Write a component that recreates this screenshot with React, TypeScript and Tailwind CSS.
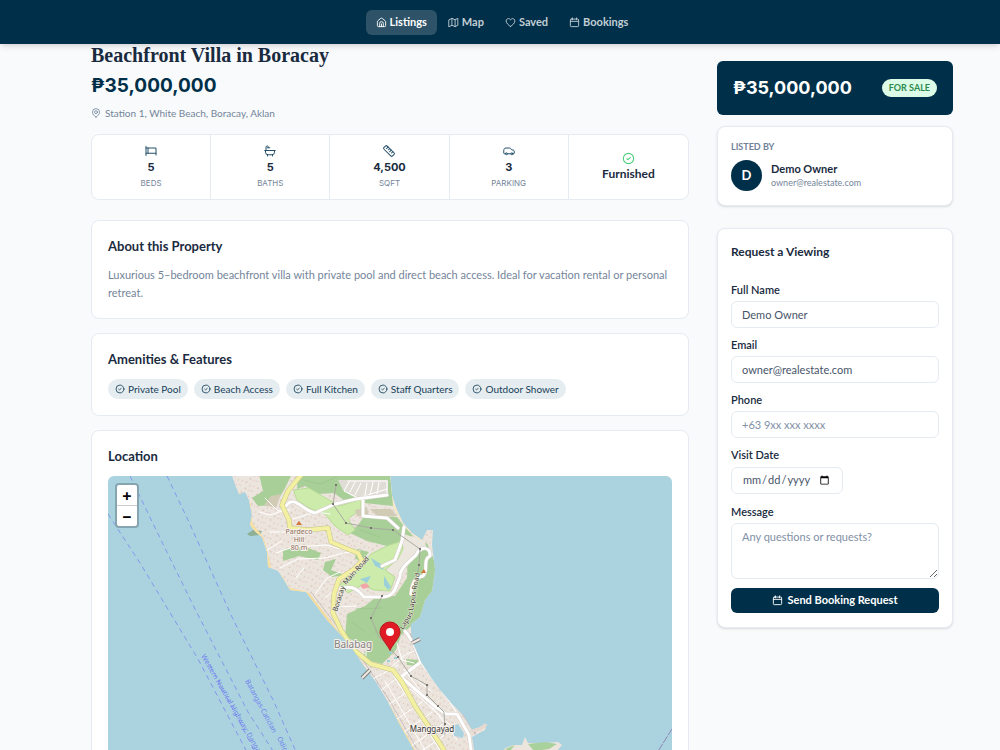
import { useState, type ReactNode } from 'react';
import clsx from 'clsx';

type IconName = 'home' | 'map' | 'heart' | 'calendar' | 'pin' | 'bed' | 'bath' | 'ruler' | 'car' | 'check';

const iconShapes: Record<IconName, ReactNode> = {
  home: (
    <>
      <path d="M3 10.500c0-1 .4-1.800 1.200-2.400l6-5a3 3 0 0 1 3.600 0l6 5c.8.6 1.200 1.400 1.200 2.400V19a2 2 0 0 1-2 2H5a2 2 0 0 1-2-2z" />
      <path d="M8 21v-7a4 4 0 0 1 8 0v7M12 15v6" />
    </>
  ),
  map: <path d="M2.500 6 8.500 3l7 3 6-3v15l-6 3-7-3-6 3zM8.500 3v15M15.500 6v15" />,
  heart: (
    <path d="M12 20.500C8 18 2.500 13.500 2.500 8.800 2.500 5.800 4.700 3.500 7.400 3.500c1.900 0 3.500 1 4.600 2.700 1.100-1.700 2.700-2.700 4.600-2.700 2.700 0 4.900 2.300 4.900 5.300 0 4.700-5.500 9.200-9.500 11.700z" />
  ),
  calendar: <path d="M5 4.500h14a2 2 0 0 1 2 2V19a2 2 0 0 1-2 2H5a2 2 0 0 1-2-2V6.500a2 2 0 0 1 2-2zM3 9.500h18M7.500 2v4M16.500 2v4" />,
  pin: (
    <>
      <path d="M12 22c-4-3.500-8.500-7-8.500-12a8.500 8.500 0 0 1 17 0c0 5-4.500 8.500-8.500 12z" />
      <circle cx="12" cy="10" r="3.500" />
    </>
  ),
  bed: <path d="M2 3v18M2 6h20v14M2 16.500h20M6 6v10.500" />,
  bath: <path d="M1.500 11h21M3 11v3.500a5 5 0 0 0 5 5h8a5 5 0 0 0 5-5V11M4 11V4.500A2.500 2.500 0 0 1 6.500 2C8 2 9 3 9 4.500M7 19.500V22M17 19.500V22M6.500 5.500h5" />,
  ruler: (
    <g transform="rotate(45 12 12)">
      <rect x="0" y="7.500" width="24" height="9" rx="2.500" />
      <path d="M5 7.500V12M9.500 7.500V11M14 7.500V12M18.500 7.500V11" />
    </g>
  ),
  car: (
    <>
      <path d="M4.500 17.500H3a1.500 1.500 0 0 1-1.500-1.500v-5c0-3 1.500-5 4.500-5h6.500c2 0 3.500 1 4.500 3.500l3.500.7c1.300.3 2 1.200 2 2.500V16a1.500 1.500 0 0 1-1.500 1.500H20M9 17.500h6.500" />
      <circle cx="6.800" cy="17.500" r="2" />
      <circle cx="17.800" cy="17.500" r="2" />
    </>
  ),
  check: (
    <>
      <circle cx="12" cy="12" r="9.500" />
      <path d="m9 12.500 2 1.500 4-3.500" />
    </>
  ),
};

function Icon({ name, className }: { name: IconName; className?: string }) {
  return (
    <svg
      viewBox="0 0 24 24"
      fill="none"
      stroke="currentColor"
      strokeWidth="2"
      strokeLinecap="round"
      strokeLinejoin="round"
      aria-hidden="true"
      className={clsx('shrink-0', className)}
    >
      {iconShapes[name]}
    </svg>
  );
}

const navItems: { label: string; icon: IconName }[] = [
  { label: 'Listings', icon: 'home' },
  { label: 'Map', icon: 'map' },
  { label: 'Saved', icon: 'heart' },
  { label: 'Bookings', icon: 'calendar' },
];

const stats: { value: string; label: string; icon: IconName }[] = [
  { value: '5', label: 'Beds', icon: 'bed' },
  { value: '5', label: 'Baths', icon: 'bath' },
  { value: '4,500', label: 'Sqft', icon: 'ruler' },
  { value: '3', label: 'Parking', icon: 'car' },
];

const amenities = ['Private Pool', 'Beach Access', 'Full Kitchen', 'Staff Quarters', 'Outdoor Shower'];

function NavBar() {
  return (
    <header className="relative z-10 flex h-11 shrink-0 items-center justify-center bg-[#003049] pl-1 shadow-md">
      <nav className="flex gap-px">
        {navItems.map((item, i) => (
          <a
            key={item.label}
            href="#"
            className={clsx(
              'flex h-[25px] items-center gap-[3px] rounded-md px-[10px] text-[11px] font-bold',
              i === 0 ? 'bg-[#2e5368] text-white' : 'text-[#c3ced5]'
            )}
          >
            <Icon name={item.icon} className="size-[11px]" />
            {item.label}
          </a>
        ))}
      </nav>
    </header>
  );
}

function Section({ title, children }: { title: string; children: ReactNode }) {
  return (
    <section className="rounded-lg border border-[#e5ebf1] bg-white p-4">
      <h2 className="mb-[11px] text-[13px] leading-[18px] font-bold text-[#1a2b40]">{title}</h2>
      {children}
    </section>
  );
}

function StatsBar() {
  return (
    <div className="mt-[13px] mb-5 grid h-[66px] grid-cols-5 divide-x divide-[#e5ebf1] rounded-lg border border-[#e5ebf1] bg-white">
      {stats.map((stat) => (
        <div key={stat.label} className="flex flex-col items-center justify-center font-['Inter',sans-serif]">
          <Icon name={stat.icon} className="size-3 text-[#24506a]" />
          <span className="mt-0.5 text-[11px] leading-4 font-bold text-[#1a2b40]">{stat.value}</span>
          <span className="mt-0.5 text-[8px] leading-3 text-[#74859a] uppercase">{stat.label}</span>
        </div>
      ))}
      <div className="flex flex-col items-center justify-center">
        <Icon name="check" className="size-[13px] text-[#4ad07c]" />
        <span className="mt-px text-xs leading-4 font-bold text-[#1a2b40]">Furnished</span>
      </div>
    </div>
  );
}

function LocationMap() {
  const [zoom, setZoom] = useState(1);
  const land =
    'M230 470 236 487 239 494 245 492 249 500 252 515 250 525 255 532 262 537 267 552 268 567 278 571 284 580 290 590 306 592 315 604 327 620 340 634 352 648 364 666 376 682 388 702 400 725 414 750 460 830H480L474 750 472 737 485 730 487 724 472 730 464 716 452 704 440 690 430 676 421 662 414 646 411 632 411 624 420 617 425 600 432 591 435 570 432 545 433 530 427 530 422 540 412 533 403 523 397 510 392 495 390 470z';
  const streets =
    'M286 506C294 494 303 511 315 513L335 504 356 499 387 495M363 498 363 516 387 518 398 528M340 589C353 584 359 591 364 597L381 597C397 597 395 585 400 577 399 569 409 562 416 555 420 546 431 546 430 556 422 560 429 570 423 576 415 578 412 582 411 594M404 527 402 541 395 560 382 566M405 631 413 642 421 662M421 662 401 677 437 708 446 714 457 714 469 735 471 750';
  const mainRoad =
    'M302 474 288 491 282 505 289 520 290 528 307 530 328 528 331 542 345 548 358 553 362 561 353 570 339 579 334 594 333 613 341 630 354 650 371 664 393 670 402 682 415 706 429 727 444 750';

  return (
    <div className="relative h-[348px] overflow-hidden rounded-md bg-[#abd3df]">
      <svg
        viewBox="108 476 564 348"
        preserveAspectRatio="xMidYMid slice"
        className="size-full"
        role="img"
        aria-label="Map of Boracay"
        fill="none"
        strokeLinecap="round"
        strokeLinejoin="round"
        style={{ transform: `scale(${zoom})` }}
      >
        <defs>
          <pattern id="buildings" width="13" height="11" patternUnits="userSpaceOnUse" patternTransform="rotate(28)">
            <path d="M1 1h2v2H1zM6 2h1v3H6zM9 7h3v1H9zM3 7h2v2H3z" fill="#dfd1c8" />
            <path d="M10 2h1v1h-1zM7 8h1v1H7z" fill="#ecbcb4" />
          </pattern>
          <clipPath id="shore">
            <path d={land} />
          </clipPath>
        </defs>

        {/* Land */}
        <path d={land} fill="#ece5de" />
        <path d="M505 748 513 745 522 745 525 737 528 743 545 743 558 742 562 745 556 752 560 790H490z" fill="#ece5de" />
        <path d="M528 744 545 742 557 744 549 749 534 751zM505 749 515 745 510 751z" fill="#a9d19c" />
        <path d="M247 534 253 530 262 531 260 535 250 536z" fill="#8eb094" />

        <g clipPath="url(#shore)">
          <path d={land} fill="url(#buildings)" />
          {/* Beaches */}
          <path d="M240 494 249 503 251 524 262 538 267 556 270 569M281 577 288 589 306 593" stroke="#f6dfa3" strokeWidth="3" />
          <path d="M308 594 340 636 364 668 388 705 414 751" stroke="#f3dc9b" strokeWidth="3" />
          <path d="M311 592 343 634 367 666 391 703 417 749" stroke="#c9c0c0" strokeWidth="1" />
          <path d="M388 476 393 505 406 527 422 541" stroke="#f5e9c6" strokeWidth="2" />
          {/* Woods */}
          <g fill="#a8cf97">
            <path d="M259 474 292 474 284 490 275 505 258 506 252 498 263 491z" />
            <path d="M298 474H390L393 506 345 501 334 493 318 494 305 486 297 489z" />
            <path d="M364 516 397 517 404 526 413 536 402 541 387 546 367 541 350 533 359 524z" />
            <path d="M283 550 303 546 321 553 318 560 299 556 283 561z" />
            <path d="M357 549 369 552 361 562 355 558zM325 562 336 559 331 570 345 575 332 577 323 570z" />
            <path d="M408 549 427 543 436 565 433 590 419 619 401 635 396 650 382 664 363 659 366 648 345 636 347 614 365 606 376 597 395 596 407 578z" />
            <path d="M406 659 418 660 417 666 407 665z" />
          </g>
          <path d="M404 534 424 541 427 548 405 562 397 574 386 573 398 560z" fill="#ebe7df" />
          {/* Golf course */}
          <g fill="#cdebaa" stroke="#b6dc96" strokeWidth="1">
            <path d="M294 490 309 488 324 497 340 506 361 499 361 509 348 519 355 530 348 535 335 526 325 514 309 508 297 500z" />
            <path d="M371 554 387 546 402 541 403 549 398 559 385 570 395 577 390 591 374 590 362 585 348 593 340 585 348 576 362 567z" />
          </g>
          <path d="M271 496 281 494 276 508 264 505zM355 510 367 507 369 517 357 516zM370 509 391 509 397 516 378 517z" fill="#d1cbb6" />
          <path d="M338 480H388V494L365 500 352 496 343 490z" fill="#dfddd5" />
          <g fill="#9bd0da">
            <path d="M371 558 375 566 384 570 381 564zM360 579 371 576 367 583zM384 576 391 587 388 590 384 585z" />
            <path d="M389 652h3v2h-3zM394 657h3v2h-3zM387 660h3v2h-3z" />
          </g>
          <path d="M360 585 366 583 370 587 363 589z" fill="#f2a6a7" />
          <path d="M304 480 320 484 337 477M360 530 380 537M356 609 382 608M374 633 388 620M352 622 364 631M413 570 423 580M409 592 420 583" stroke="#9cc78e" strokeWidth="1" />

          {/* Minor streets */}
          <g stroke="#fff" strokeWidth="1">
            <path d="M265 498 278 511 290 510M259 512 270 515 286 510M293 519 316 512 330 514M269 532 288 532M276 553 293 547 327 545 339 549M280 568 298 559 325 558 343 553 360 551M296 578 304 568M267 550 282 541M310 532 325 528M315 594 327 578 340 572M326 597 338 588 350 589M336 607 356 606M349 482 344 491 358 498 387 489M355 482 350 492M361 483 355 495M367 483 365 495M373 482 370 496M379 482 377 494M348 481H387V493" />
            <path d="M355 651 378 666M366 656 366 650M388 670 406 654 418 650M373 679 398 665M380 691 406 671M388 705 414 687M397 719 422 702M404 732 432 712M411 746 443 724M423 750 453 729M397 643 402 660 414 663M411 640 416 650M408 673 431 691M412 690 450 725M421 663 454 708 468 735M385 681 426 752M394 676 443 755M404 669 457 740" />
          </g>

          {/* Main roads */}
          <path d={streets} stroke="#d3cdc9" strokeWidth="4" />
          <path d={streets} stroke="#fff" strokeWidth="3" />
          <path d={mainRoad} stroke="#c4c487" strokeWidth="5" />
          <path d={mainRoad} stroke="#f3f0a2" strokeWidth="4" />

          {/* Power line */}
          <path d="M336 485 333 504 346 523 371 528 393 530 420 549 419 565 418 572M382 596 371 618 379 637 398 657 411 676 427 685 427 695 438 706 444 712 445 735" stroke="#a9aaa0" strokeWidth="1" />
          <path d="M335 484h2v2h-2zM332 503h2v2h-2zM345 522h2v2h-2zM370 527h2v2h-2zM392 529h2v2h-2zM419 548h2v2h-2zM418 564h2v2h-2zM381 595h2v2h-2zM370 617h2v2h-2zM397 656h2v2h-2zM410 675h2v2h-2zM426 684h2v2h-2zM426 694h2v2h-2zM437 705h2v2h-2zM444 723h2v2h-2z" fill="#77736f" />
          <path d="M411 634 423 662 441 688 463 714 475 733" stroke="#c2babd" strokeWidth="2" />
        </g>

        {/* Piers */}
        <path d="M362 678 370 670M412 643 420 639" stroke="#807e7c" strokeWidth="4" strokeLinecap="butt" />
        <path d="M362 678 370 670M412 643 420 639" stroke="#eeeae4" strokeWidth="2" strokeLinecap="butt" />
        <path d="M452 726 458 724 464 733 463 738 454 736z" fill="#abd3df" />
        <path d="M472 731 480 729 485 725" stroke="#e6d8cf" strokeWidth="3" />

        {/* Ferry lines */}
        <path
          d="M108 514 140 563 198 659 248 754 275 820M130 476 160 538 195 609 248 712 275 754M167 476 188 520 232 617 274 702 297 754M210 665 256 754"
          stroke="#8596ec"
          strokeWidth="1"
          strokeDasharray="5 4"
          strokeLinecap="butt"
        />
        <path d="M672 729 655 756" stroke="#8d86b5" strokeWidth="1" strokeDasharray="7 2" />

        {/* Labels */}
        <g fontFamily="'Noto Sans', sans-serif">
          <g fontSize="7" fill="#6f7fee">
            <text transform="translate(201 656) rotate(60)">Western Nautical Highway: Danga</text>
            <text transform="translate(245 681) rotate(62)">Batangas-Caticlan</text>
            <text transform="translate(277 738) rotate(65)">Odio</text>
          </g>
          <g fontSize="7" fill="#403e38" stroke="#f1efdd" strokeWidth="1" paintOrder="stroke">
            <text transform="translate(337 612) rotate(-72)">Boracay</text>
            <text transform="translate(346 585) rotate(-48)">Main Road</text>
            <text transform="translate(403 630) rotate(-58)">Lapus</text>
            <text transform="translate(413 611) rotate(-80)">Lapus Road</text>
          </g>
          <g textAnchor="middle" stroke="#f5f1ed" strokeWidth="2" paintOrder="stroke">
            <g fontSize="7" fill="#8f6e59">
              <text x="299" y="534">Pardeco</text>
              <text x="299" y="542">Hill</text>
              <text x="299" y="550">80 m</text>
            </g>
            <text x="353" y="648" fontSize="10" fill="#85817e">Balabag</text>
            <text x="432" y="732" fontSize="8" fill="#33312f">Manggayad</text>
          </g>
        </g>
        <path d="m299 521 3 4h-6zM424 569l2 4h-5z" fill="#d27538" />

        {/* Marker */}
        <path d="M390 650C384 640 380 637 380 632a10 10 0 0 1 20 0c0 5-4 8-10 18z" fill="#e11b23" stroke="#b7151d" strokeWidth="1" />
        <circle cx="390" cy="632" r="4" fill="#fff" />
      </svg>

      <div className="absolute top-[7px] left-[7px] flex w-6 flex-col rounded-sm border-2 border-[#86a5b0] bg-white font-['Inter',sans-serif] text-base leading-4 font-semibold text-black">
        <button type="button" aria-label="Zoom in" onClick={() => setZoom(zoom + 0.25)} className="flex h-[21px] items-center justify-center border-b border-[#ccc]">
          +
        </button>
        <button type="button" aria-label="Zoom out" onClick={() => setZoom(Math.max(1, zoom - 0.25))} className="flex h-5 items-center justify-center">
          −
        </button>
      </div>
    </div>
  );
}

const fieldClass =
  'block w-full rounded-md border border-[#e5ebf1] bg-white px-[10px] text-[11px] text-[#475569] placeholder:text-[#8190a5]';

function Field({ id, label, children }: { id: string; label: string; children: ReactNode }) {
  return (
    <div>
      <label htmlFor={id} className="mb-[3px] block text-[11px] leading-4 font-semibold text-[#1a2b40]">
        {label}
      </label>
      {children}
    </div>
  );
}

function BookingForm() {
  return (
    <form className="mt-[22px] rounded-lg border border-[#e5ebf1] bg-white px-[13px] py-[14px] shadow-sm" onSubmit={(e) => e.preventDefault()}>
      <h2 className="mb-[21px] text-xs leading-[18px] font-bold text-[#1a2b40]">Request a Viewing</h2>
      <div className="flex flex-col gap-[9px]">
        <Field id="name" label="Full Name">
          <input id="name" type="text" defaultValue="Demo Owner" className={clsx(fieldClass, 'h-[27px]')} />
        </Field>
        <Field id="email" label="Email">
          <input id="email" type="email" defaultValue="owner@realestate.com" className={clsx(fieldClass, 'h-[27px]')} />
        </Field>
        <Field id="phone" label="Phone">
          <input id="phone" type="tel" placeholder="+63 9xx xxx xxxx" className={clsx(fieldClass, 'h-[27px]')} />
        </Field>
        <Field id="visit" label="Visit Date">
          <input id="visit" type="date" className={clsx(fieldClass, 'mt-1 mb-px h-[27px] max-w-28')} />
        </Field>
        <Field id="message" label="Message">
          <textarea id="message" placeholder="Any questions or requests?" className={clsx(fieldClass, 'h-14 py-[5px]')} />
        </Field>
        <button type="submit" className="flex h-[25px] items-center justify-center gap-1 rounded-md bg-[#003049] text-[11px] font-bold text-white">
          <Icon name="calendar" className="size-[11px]" />
          Send Booking Request
        </button>
      </div>
    </form>
  );
}

export default function App() {
  return (
    <div className="flex h-screen flex-col overflow-hidden bg-[#f8fafc] font-['Lato',sans-serif]">
      <NavBar />
      <main className="flex gap-7 pr-[47px] pl-[91px]">
        <div className="min-w-0 flex-1">
          <h1 className="font-['Liberation_Serif',serif] text-xl leading-[22px] font-bold text-[#1a2b40]">
            Beachfront Villa in Boracay
          </h1>
          <p className="mt-[6px] font-['Inter',sans-serif] text-[19px] leading-7 font-bold text-[#003049]">₱35,000,000</p>
          <p className="mt-[5px] flex items-center gap-1 text-[10px] leading-4 text-[#74859a]">
            <Icon name="pin" className="size-[10px]" />
            Station 1, White Beach, Boracay, Aklan
          </p>

          <StatsBar />

          <div className="flex flex-col gap-[14px]">
            <Section title="About this Property">
              <p className="text-[11px] leading-[18px] text-[#74859a]">
                Luxurious 5–bedroom beachfront villa with private pool and direct beach access. Ideal for vacation rental or
                personal retreat.
              </p>
            </Section>
            <Section title="Amenities & Features">
              <ul className="flex flex-wrap gap-[6px]">
                {amenities.map((name) => (
                  <li key={name} className="flex h-5 items-center gap-[3px] rounded-full bg-[#e6edf0] px-[7px] text-[10px] text-[#164058]">
                    <Icon name="check" className="size-[10px]" />
                    {name}
                  </li>
                ))}
              </ul>
            </Section>
            <Section title="Location">
              <LocationMap />
            </Section>
          </div>
        </div>

        <aside className="w-[236px] shrink-0 pt-[17px]">
          <div className="flex h-[54px] items-center justify-between rounded-md bg-[#003049] px-4">
            <span className="font-['Inter',sans-serif] text-lg font-bold text-white">₱35,000,000</span>
            <span className="rounded-full bg-[#dcfce7] px-[7px] text-[9px] leading-[18px] font-bold text-[#2f8a4f]">FOR SALE</span>
          </div>

          <div className="mt-[11px] rounded-lg border border-[#e5ebf1] bg-white px-[13px] py-[14px] shadow-sm">
            <h3 className="text-[9px] leading-3 font-bold text-[#71819a]">LISTED BY</h3>
            <div className="mt-[7px] flex items-center gap-[9px]">
              <div className="flex size-[31px] items-center justify-center rounded-full bg-[#003049] text-[13px] font-bold text-white">D</div>
              <div>
                <p className="text-[11px] leading-[15px] font-bold text-[#1a2b40]">Demo Owner</p>
                <p className="text-[9px] leading-[14px] text-[#74859a]">owner@realestate.com</p>
              </div>
            </div>
          </div>

          <BookingForm />
        </aside>
      </main>
    </div>
  );
}
